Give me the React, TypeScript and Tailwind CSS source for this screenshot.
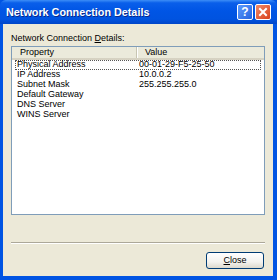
const rows = [
  { name: "Physical Address", value: "00-01-29-F5-25-50" },
  { name: "IP Address", value: "10.0.0.2" },
  { name: "Subnet Mask", value: "255.255.255.0" },
  { name: "Default Gateway", value: "" },
  { name: "DNS Server", value: "" },
  { name: "WINS Server", value: "" },
];

const App = () => {
  return (
    <div className="w-[277px] h-[280px] flex flex-col bg-[#0054e3] font-['Liberation_Sans',Arial,sans-serif] text-[9px] text-black select-none">
      {/* title bar */}
      <div className="h-[24px] shrink-0 flex items-center pl-[6px] pr-[6px] rounded-t-[6px] bg-[linear-gradient(to_bottom,#3d8ef7_0%,#0a5fea_12%,#0055e5_45%,#0053e0_80%,#0046c8_100%)]">
        <span className="text-white font-bold text-[10.8px] [text-shadow:1px_1px_0_#0a2a8a]">
          Network Connection Details
        </span>
        <div className="ml-auto flex gap-[2px]">
          <div className="w-[16px] h-[16px] rounded-[2px] border border-white bg-[linear-gradient(135deg,#5c9cff,#2663de)] flex items-center justify-center text-white font-bold text-[12px] leading-none">
            ?
          </div>
          <div className="w-[16px] h-[16px] rounded-[2px] border border-white bg-[linear-gradient(135deg,#f08a6a,#d9401a)] flex items-center justify-center">
            <svg width="10" height="10" viewBox="0 0 10 10">
              <path d="M2 2 L8 8 M8 2 L2 8" stroke="white" strokeWidth="2" strokeLinecap="square" />
            </svg>
          </div>
        </div>
      </div>

      {/* body */}
      <div className="flex-1 flex flex-col bg-[#ece9d8] ml-[3px] mr-[4px] mb-[4px] px-[8px]">
        <div className="mt-[9px] leading-[10px]">
          Network Connection <span className="underline">D</span>etails:
        </div>
        <div className="mt-[3px] h-[169px] border border-[#7f9db9] bg-white flex flex-col">
          <div className="h-[13px] flex bg-[#ebeadb] border-b-[2px] border-[#d6d2c2] text-[9px]">
            <div className="w-[125px] pl-[8px] flex items-center border-r border-[#c7c5b2]">Property</div>
            <div className="flex-1 pl-[7px] flex items-center border-l border-white">Value</div>
          </div>
          <div>
            {rows.map((r, i) => (
              <div
                key={r.name}
                className={
                  i === 0
                    ? "h-[10px] mx-[3px] flex items-center border border-dotted border-[#555]"
                    : "h-[10px] mx-[3px] flex items-center border border-transparent"
                }
              >
                <div className="w-[121px] pl-[1px]">{r.name}</div>
                <div className="flex-1 pl-[2px]">{r.value}</div>
              </div>
            ))}
          </div>
        </div>
        <div className="mt-[27px] border-t border-[#aca899] border-b border-b-white"></div>
        <div className="mt-[8px] flex justify-end pr-[1px]">
          <div className="w-[58px] h-[17px] rounded-[3px] border border-[#003c74] bg-[linear-gradient(to_bottom,#ffffff,#f3f2ee_60%,#dcd9cd)] flex items-center justify-center">
            <span>
              <span className="underline">C</span>lose
            </span>
          </div>
        </div>
      </div>
    </div>
  );
};

export default App;
